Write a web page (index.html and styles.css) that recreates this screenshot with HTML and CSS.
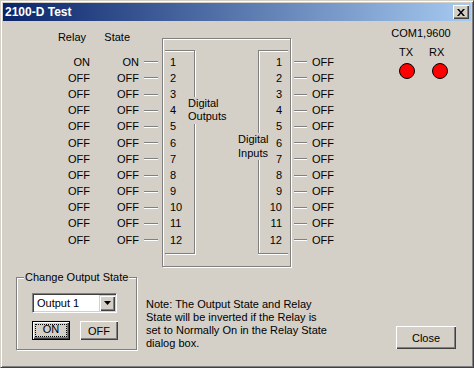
FILE: index.html
```html
<!DOCTYPE html>
<html lang="en">

<head>
    <meta charset="UTF-8">
    <title>2100-D Test</title>
    <link rel="stylesheet" href="styles.css">
</head>

<body>
    <div class="window">
        <div class="titlebar">
            <span class="title">2100-D Test</span>
            <button class="caption-btn" type="button">
                <svg width="8" height="7" viewBox="0 0 8 7">
                    <path d="M0 0h2l2 2.5 2-2.5h2l-3 3.5 3 3.5h-2l-2-2.5-2 2.5h-2l3-3.5z" fill="#000" />
                </svg>
            </button>
        </div>

        <div class="client">
            <div class="top">
                <div class="col col-relay">
                    <div class="head">Relay</div>
                    <div class="rows">
                        <div>ON</div><div>OFF</div><div>OFF</div><div>OFF</div>
                        <div>OFF</div><div>OFF</div><div>OFF</div><div>OFF</div>
                        <div>OFF</div><div>OFF</div><div>OFF</div><div>OFF</div>
                    </div>
                </div>
                <div class="col col-state">
                    <div class="head">State</div>
                    <div class="rows">
                        <div>ON</div><div>OFF</div><div>OFF</div><div>OFF</div>
                        <div>OFF</div><div>OFF</div><div>OFF</div><div>OFF</div>
                        <div>OFF</div><div>OFF</div><div>OFF</div><div>OFF</div>
                    </div>
                </div>
                <div class="col col-dash">
                    <div class="rows">
                        <div><i></i></div><div><i></i></div><div><i></i></div><div><i></i></div>
                        <div><i></i></div><div><i></i></div><div><i></i></div><div><i></i></div>
                        <div><i></i></div><div><i></i></div><div><i></i></div><div><i></i></div>
                    </div>
                </div>

                <div class="frame">
                    <div class="bank bank-out">
                        <div class="rows">
                            <div>1</div><div>2</div><div>3</div><div>4</div>
                            <div>5</div><div>6</div><div>7</div><div>8</div>
                            <div>9</div><div>10</div><div>11</div><div>12</div>
                        </div>
                    </div>
                    <div class="bank bank-in">
                        <div class="rows">
                            <div>1</div><div>2</div><div>3</div><div>4</div>
                            <div>5</div><div>6</div><div>7</div><div>8</div>
                            <div>9</div><div>10</div><div>11</div><div>12</div>
                        </div>
                    </div>
                    <div class="bank-label label-out">Digital<br>Outputs</div>
                    <div class="bank-label label-in">Digital<br>Inputs</div>
                </div>

                <div class="col col-dash col-dash-in">
                    <div class="rows">
                        <div><i></i></div><div><i></i></div><div><i></i></div><div><i></i></div>
                        <div><i></i></div><div><i></i></div><div><i></i></div><div><i></i></div>
                        <div><i></i></div><div><i></i></div><div><i></i></div><div><i></i></div>
                    </div>
                </div>
                <div class="col col-input">
                    <div class="rows">
                        <div>OFF</div><div>OFF</div><div>OFF</div><div>OFF</div>
                        <div>OFF</div><div>OFF</div><div>OFF</div><div>OFF</div>
                        <div>OFF</div><div>OFF</div><div>OFF</div><div>OFF</div>
                    </div>
                </div>

                <div class="com">
                    <div class="com-port">COM1,9600</div>
                    <div class="com-labels">
                        <span>TX</span>
                        <span>RX</span>
                    </div>
                    <div class="leds">
                        <span class="led"></span>
                        <span class="led"></span>
                    </div>
                </div>
            </div>

            <div class="bottom">
                <fieldset class="group">
                    <legend>Change Output State</legend>
                    <div class="group-body">
                        <div class="combo">
                            <span class="combo-text">Output 1</span>
                            <span class="combo-btn">
                                <svg width="7" height="4" viewBox="0 0 7 4">
                                    <path d="M0 0h7l-3.5 4z" fill="#000" />
                                </svg>
                            </span>
                        </div>
                        <div class="btn-row">
                            <button class="btn btn-default" type="button"><span>ON</span></button>
                            <button class="btn" type="button">OFF</button>
                        </div>
                    </div>
                </fieldset>

                <p class="note">
                    Note: The Output State and Relay<br>
                    State will be inverted if the Relay is<br>
                    set to Normally On in the Relay State<br>
                    dialog box.
                </p>

                <button class="btn btn-close" type="button">Close</button>
            </div>
        </div>
    </div>
</body>

</html>
```

FILE: styles.css
```css
body {
    margin: 0;
    font: 11px "Liberation Sans", Arial, sans-serif;
    color: #000;
    background: #d4d0c8;
}

/* Janela estilo Windows clássico */
.window {
    width: 474px;
    height: 368px;
    box-sizing: border-box;
    border: 1px solid;
    border-color: #d4d0c8 #404040 #404040 #d4d0c8;
    box-shadow: inset 1px 1px #fff, inset -1px -1px #808080;
    padding: 2px;
    background: #d4d0c8;
    display: flex;
    flex-direction: column;
}

.titlebar {
    height: 18px;
    flex: none;
    display: flex;
    align-items: center;
    padding-left: 2px;
    background: linear-gradient(90deg, #0a246a, #a6caf0);
    color: #fff;
}

.title {
    font: bold 12px "Liberation Sans", Arial, sans-serif;
}

.caption-btn {
    margin: 0 2px 0 auto;
    width: 16px;
    height: 14px;
    padding: 0;
    border: 0;
    background: #d4d0c8;
    box-shadow: inset 1px 1px #fff, inset -1px -1px #404040, inset -2px -2px #808080;
    display: flex;
    align-items: center;
    justify-content: center;
}

.client {
    flex: 1;
}

.top {
    height: 249px;
    display: flex;
    align-items: flex-start;
}

.col {
    flex: none;
}

.head {
    height: 16px;
    line-height: 16px;
    margin-top: 8px;
    margin-bottom: 8.6px;
    text-align: right;
}

.rows > div {
    height: 16.2px;
    line-height: 16.2px;
    white-space: nowrap;
}

.col-relay {
    width: 87px;
    text-align: right;
}

.col-relay .head {
    padding-right: 4px;
}

.col-state {
    width: 49px;
    text-align: right;
}

.col-state .head {
    padding-right: 9px;
}

/* Tracinhos entre as colunas e as caixas */
.col-dash {
    width: 23px;
    padding-top: 32.6px;
}

.col-dash .rows > div {
    display: flex;
    align-items: center;
}

.col-dash i {
    display: block;
    width: 14px;
    height: 0;
    margin: 1px 0 0 5px;
    border-top: 1px solid #808080;
    border-bottom: 1px solid #fff;
}

.col-dash-in {
    width: 16px;
}

.col-dash-in i {
    width: 13px;
    margin-left: 3px;
}

.col-input {
    margin-left: 5px;
    padding-top: 32.6px;
}

/* Moldura das entradas e saídas */
.frame {
    position: relative;
    flex: none;
    margin-top: 17px;
    width: 129px;
    height: 229px;
    box-sizing: border-box;
    border: 1px solid #808080;
    box-shadow: inset 1px 1px #fff, 1px 1px #fff;
    padding: 11px 2px 0;
    display: flex;
    justify-content: space-between;
    align-items: flex-start;
}

.bank {
    width: 30px;
    height: 204px;
    box-sizing: border-box;
    border: 1px solid #808080;
    padding-top: 2.6px;
}

.bank-out {
    border-left: 0;
    padding-left: 5px;
    box-shadow: inset 0 1px #fff, 1px 1px #fff;
}

.bank-in {
    border-right: 0;
    padding-right: 6px;
    text-align: right;
    box-shadow: inset 1px 1px #fff, 0 1px #fff;
}

.bank-label {
    position: absolute;
    padding: 0 1px;
    line-height: 13.5px;
    background: #d4d0c8;
}

.label-out {
    left: 24px;
    top: 57.5px;
}

.label-in {
    left: 74px;
    top: 94px;
}

/* Porta serial e LEDs */
.com {
    flex: none;
    margin: 0 20px 0 auto;
    width: 60px;
    padding-top: 5px;
    text-align: center;
}

.com-port {
    line-height: 14px;
}

.com-labels {
    display: flex;
    gap: 16px;
    margin-top: 4.7px;
    padding-left: 8px;
    line-height: 14px;
}

.leds {
    display: flex;
    gap: 16.7px;
    margin-top: 4.3px;
    padding-left: 8px;
}

.led {
    width: 16px;
    height: 16px;
    box-sizing: border-box;
    border: 1px solid #000;
    border-radius: 50%;
    background: #ff0000;
}

/* Parte de baixo */
.bottom {
    display: flex;
    align-items: flex-start;
}

.group {
    margin: 0 0 0 13px;
    padding: 0;
    width: 121px;
    min-width: 0;
    box-sizing: border-box;
    border: 1px solid #808080;
    box-shadow: inset 1px 1px #fff, 1px 1px #fff;
}

.group legend {
    margin-left: 7px;
    padding: 0 1px;
    line-height: 14px;
    background: #d4d0c8;
}

.group-body {
    padding: 9px 0 9px 15px;
}

.combo {
    width: 85px;
    height: 20px;
    box-sizing: border-box;
    display: flex;
    align-items: center;
    border: 1px solid;
    border-color: #808080 #fff #fff #808080;
    box-shadow: inset 1px 1px #404040, inset -1px -1px #d4d0c8;
    padding: 1px;
    background: #fff;
}

.combo-text {
    padding-left: 3px;
    line-height: 16px;
}

.combo-btn {
    margin-left: auto;
    width: 16px;
    height: 16px;
    box-sizing: border-box;
    background: #d4d0c8;
    box-shadow: inset 1px 1px #d4d0c8, inset 2px 2px #fff, inset -1px -1px #404040, inset -2px -2px #808080;
    display: flex;
    align-items: center;
    justify-content: center;
}

.btn-row {
    display: flex;
    gap: 10px;
    margin-top: 8px;
}

.btn {
    width: 38px;
    height: 19px;
    padding: 0;
    border: 0;
    font: 11px "Liberation Sans", Arial, sans-serif;
    color: #000;
    background: #d4d0c8;
    box-shadow: inset 1px 1px #fff, inset -1px -1px #404040, inset -2px -2px #808080;
}

.btn-default {
    border: 1px solid #000;
    box-shadow: inset 1px 1px #fff, inset -1px -1px #404040, inset -2px -2px #808080;
    padding: 3px;
}

.btn-default span {
    display: block;
    height: 100%;
    box-sizing: border-box;
    line-height: 9px;
    outline: 1px dotted #000;
    outline-offset: 0;
}

.note {
    margin: 27.5px 0 0 9px;
    line-height: 13px;
    white-space: nowrap;
}

.btn-close {
    margin: 56px 15px 0 auto;
    width: 60px;
    height: 23px;
}
```
